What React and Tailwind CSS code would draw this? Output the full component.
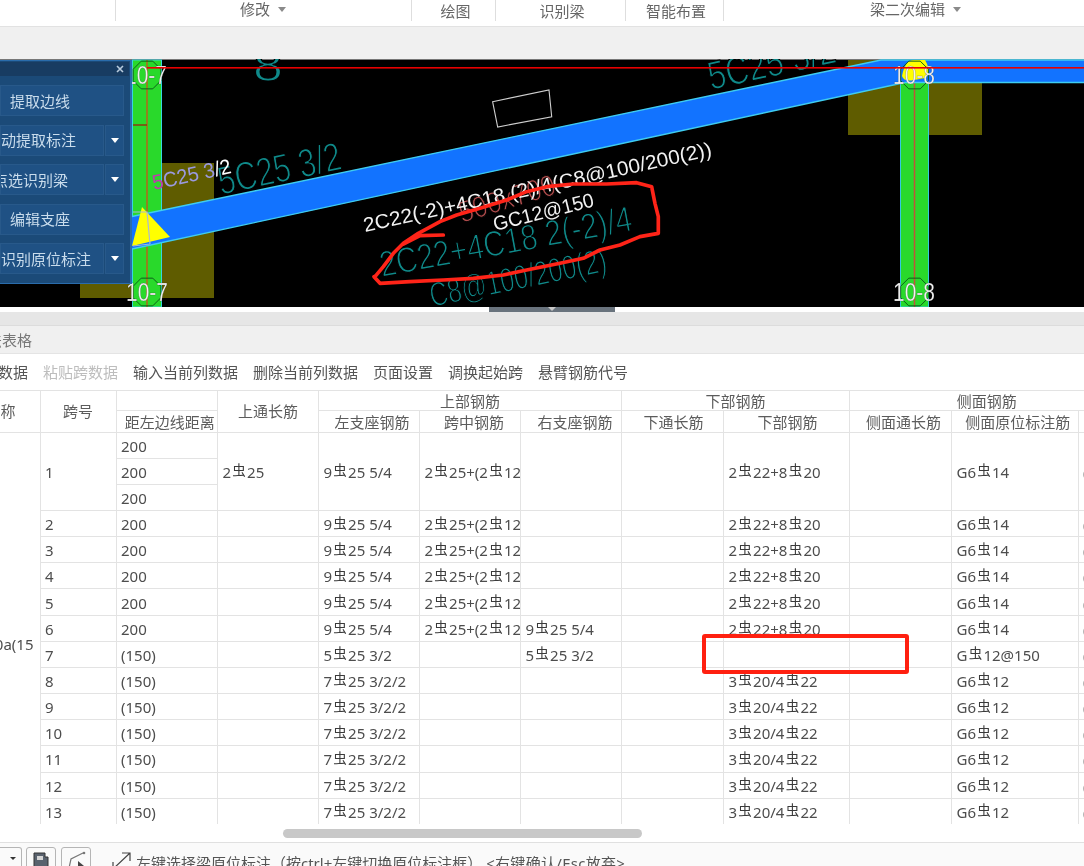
const F = "虫";
function Bar() {
  return <span className="inline-block w-[16px] text-center text-[13.5px] leading-none align-[2.5px] text-[#3a3a3a]">{F}</span>;
}
function Rebar({ t }) {
  const parts = t.split("#");
  return (
    <>
      {parts.map((p, i) => (
        <span key={i}>
          {i > 0 && <Bar />}
          {p}
        </span>
      ))}
    </>
  );
}
const cell = "border-r border-b border-[#e3e3e3] flex items-center whitespace-nowrap overflow-hidden";
const hd = cell + " justify-center text-[#5c5c5c]";
const td = cell + " pl-[4.5px] pt-[1px] text-[#4d4d4d]";

function Cell({ t, span3, className = "" }) {
  return (
    <div className={td + " " + (span3 ? "row-span-3 " : "") + className}>
      {t ? <Rebar t={t} /> : null}
    </div>
  );
}

const rows = [
  ["2", "200", "", "9#25 5/4", "2#25+(2#12", "", "", "2#22+8#20", "", "G6#14"],
  ["3", "200", "", "9#25 5/4", "2#25+(2#12", "", "", "2#22+8#20", "", "G6#14"],
  ["4", "200", "", "9#25 5/4", "2#25+(2#12", "", "", "2#22+8#20", "", "G6#14"],
  ["5", "200", "", "9#25 5/4", "2#25+(2#12", "", "", "2#22+8#20", "", "G6#14"],
  ["6", "200", "", "9#25 5/4", "2#25+(2#12", "9#25 5/4", "", "2#22+8#20", "", "G6#14"],
  ["7", "(150)", "", "5#25 3/2", "", "5#25 3/2", "", "", "", "G #12@150"],
  ["8", "(150)", "", "7#25 3/2/2", "", "", "", "3#20/4#22", "", "G6#12"],
  ["9", "(150)", "", "7#25 3/2/2", "", "", "", "3#20/4#22", "", "G6#12"],
  ["10", "(150)", "", "7#25 3/2/2", "", "", "", "3#20/4#22", "", "G6#12"],
  ["11", "(150)", "", "7#25 3/2/2", "", "", "", "3#20/4#22", "", "G6#12"],
  ["12", "(150)", "", "7#25 3/2/2", "", "", "", "3#20/4#22", "", "G6#12"],
  ["13", "(150)", "", "7#25 3/2/2", "", "", "", "3#20/4#22", "", "G6#12"],
];

function Table() {
  return (
    <div className="h-[434px] overflow-hidden border-t border-[#e3e3e3] relative">
      <div className="grid w-[1124px] grid-cols-[40.5px_76px_101.5px_101px_101px_101px_101px_102px_126px_102px_126.5px_46px] grid-rows-[20px_21.5px_repeat(15,26.17px)]">
        <div className={hd + " row-span-2 justify-end pr-[24px]"}>名称</div>
        <div className={hd + " row-span-2"}>跨号</div>
        <div className={hd}></div>
        <div className={hd + " row-span-2"}>上通长筋</div>
        <div className={hd + " col-span-3"}>上部钢筋</div>
        <div className={hd + " col-span-2"}>下部钢筋</div>
        <div className={hd + " col-span-3"}>侧面钢筋</div>
        <div className={hd + " pl-[6px] pt-[1px]"}>距左边线距离</div>
        <div className={hd + " pl-[6px] pt-[1px]"}>左支座钢筋</div>
        <div className={hd + " pl-[8px] pt-[1px]"}>跨中钢筋</div>
        <div className={hd + " pl-[8px] pt-[1px]"}>右支座钢筋</div>
        <div className={hd + " pl-[2px] pt-[1px]"}>下通长筋</div>
        <div className={hd + " pl-[2px] pt-[1px]"}>下部钢筋</div>
        <div className={hd + " pl-[6px] pt-[1px]"}>侧面通长筋</div>
        <div className={hd + " pl-[6px] pt-[1px]"}>侧面原位标注筋</div>
        <div className={hd}></div>

        <div className={cell + " row-span-[15] justify-end pr-[6px] pt-[32px] text-[#4d4d4d]"}>0a(15</div>
        <Cell t="1" span3 />
        <Cell t="200" />
        <Cell t="2#25" span3 />
        <Cell t="9#25 5/4" span3 />
        <Cell t="2#25+(2#12" span3 />
        <Cell t="" span3 />
        <Cell t="" span3 />
        <Cell t="2#22+8#20" span3 />
        <Cell t="" span3 />
        <Cell t="G6#14" span3 />
        <Cell t="(" span3 />
        <Cell t="200" />
        <Cell t="200" />
        {rows.map((r, i) => (
          <div key={i} className="contents">
            {r.map((c, j) => (
              <Cell key={j} t={c} />
            ))}
            <Cell t="(" />
          </div>
        ))}
      </div>
      <div className="absolute left-[702px] top-[243px] w-[207px] h-[40px] border-[4px] border-[#ff2010] rounded-[3px]"></div>
    </div>
  );
}

function PanelButton({ text, offset, arrow }) {
  return (
    <div className="flex h-[31px] gap-px">
      <div
        className={
          "h-full flex items-center bg-[#1f5184] border border-[#28598a] text-[#c9dcec] overflow-hidden whitespace-nowrap " +
          (arrow ? "w-[104px]" : "w-[124px]")
        }
      >
        <span className={offset}>{text}</span>
      </div>
      {arrow && (
        <div className="w-[19px] h-full flex items-center justify-center bg-[#1f5184] border border-[#28598a]">
          <div className="w-0 h-0 border-x-[4px] border-x-transparent border-t-[5px] border-t-white"></div>
        </div>
      )}
    </div>
  );
}

function Panel() {
  return (
    <div className="absolute left-0 top-[1px] w-[132px] h-[224px] bg-[#1b4a78] border-r-2 border-b border-t border-[#2a6cab]">
      <div className="h-[14px] mt-[1px] mr-[1px] bg-[#183c62] flex items-center justify-end pr-[5px]">
        <svg width="8" height="8" viewBox="0 0 8 8">
          <path d="M1 1L7 7M7 1L1 7" stroke="#b8cbdd" strokeWidth="1.6" />
        </svg>
      </div>
      <div className="flex flex-col gap-[8.5px] mt-[9px]">
        <PanelButton text="提取边线" offset="ml-[9px]" />
        <PanelButton text="动提取标注" offset="ml-0" arrow />
        <PanelButton text="点选识别梁" offset="-ml-[8px]" arrow />
        <PanelButton text="编辑支座" offset="ml-[9px]" />
        <PanelButton text="识别原位标注" offset="ml-0" arrow />
      </div>
    </div>
  );
}

function Hex({ cx, cy }) {
  const r = 15;
  const pts = [0, 1, 2, 3, 4, 5, 6, 7].map((i) => {
    const a = (Math.PI / 4) * i + Math.PI / 8;
    return `${cx + r * Math.cos(a)},${cy + r * Math.sin(a)}`;
  });
  return <polygon points={pts.join(" ")} fill="none" stroke="#0d5f1a" strokeWidth="1" />;
}

function Label({ x, y, t }) {
  return (
    <text x={x} y={y} fontSize="25" fill="#f2f2f2" stroke="#000" strokeOpacity="0.35" strokeWidth="0.5" textLength="42" lengthAdjust="spacingAndGlyphs">
      {t}
    </text>
  );
}

function Cad({ x, y, rot, size, len, fill = "#0f8a8a", thin = 1.25, children }) {
  return (
    <text
      transform={`rotate(${rot} ${x} ${y})`}
      x={x}
      y={y}
      fontSize={size}
      fill={fill}
      stroke="#000"
      strokeWidth={thin}
      textLength={len}
      lengthAdjust="spacingAndGlyphs"
    >
      {children}
    </text>
  );
}

function CadCanvas() {
  return (
    <svg className="block" width="1084" height="248" viewBox="0 59 1084 248" fontFamily="'Liberation Sans', sans-serif">
      <rect x="0" y="59" width="1084" height="248" fill="#000" />
      <rect x="0" y="59" width="1084" height="1" fill="#777" />
      <rect x="80" y="284" width="134" height="14" fill="#5f5c00" />
      <rect x="162" y="163" width="52" height="135" fill="#5f5c00" />
      <rect x="848" y="60" width="134" height="75" fill="#5f5c00" />
      <rect x="132.5" y="60" width="29" height="247" fill="#29d92b" stroke="#35d6e0" strokeWidth="1" />
      <rect x="900.5" y="80" width="28" height="227" fill="#29d92b" stroke="#35c8e0" strokeWidth="1" />
      <line x1="147" y1="60" x2="147" y2="307" stroke="#b5651d" strokeWidth="1.5" />
      <line x1="914.5" y1="80" x2="914.5" y2="307" stroke="#c0533a" strokeWidth="1.5" />
      <line x1="133" y1="125" x2="147" y2="125" stroke="#8a3a10" strokeWidth="1.5" />
      <polygon points="132,216.5 881,60 1084,60 1084,82.5 905,82.5 132,249" fill="#1273ff" />
      <path d="M132,216.5 L881,60 L1084,60 M132,249 L905,82.5 L1084,82.5" fill="none" stroke="#3fcdf0" strokeWidth="1.4" />
      <polygon points="142,207 132,246 170,237" fill="#ffff00" />
      <path d="M133,212 L147,212 L150,244 M133,246 L150,244" fill="none" stroke="#a8b8d8" strokeWidth="1.2" />
      <path d="M902,76 Q905,60 914,60 L925,60 Q932,72 925,78 L914,80 Q904,82 902,76Z" fill="#ffff00" />
      <Hex cx={147} cy={75} />
      <Hex cx={147} cy={292} />
      <Hex cx={914.5} cy={75} />
      <Hex cx={914.5} cy={292} />
      <Label x={125} y={84} t="10-7" />
      <Label x={126} y={301} t="10-7" />
      <Label x={893} y={84} t="10-8" />
      <Label x={893} y={301} t="10-8" />

      <Cad x={253} y={81} rot={0} size={44} len={30}>8</Cad>
      <polygon points="492.6,101.7 549,90 551.7,116.7 497.7,127" fill="none" stroke="#cfcfcf" strokeWidth="1.1" />

      <Cad x={221} y={195} rot={-12} size={40} len={125}>5C25 3/2</Cad>
      <Cad x={711} y={90} rot={-12.3} size={40} len={130}>5C25 3/2</Cad>
      <Cad x={382} y={277} rot={-10.5} size={36} len={256}>2C22+4C18  2(-2)/4</Cad>
      <Cad x={432} y={307} rot={-11.5} size={34} len={180}>C8@100/200(2)</Cad>
      <Cad x={462} y={223} rot={-17} size={30} len={100} fill="#b04c4c" thin={0.9}>500x700</Cad>

      <rect x="147" y="67" width="937" height="1.6" fill="#e80000" />

      <text transform="rotate(-12.3 154 190)" x="154" y="190" fontSize="21" fill="#9a9ae0" textLength="80" lengthAdjust="spacingAndGlyphs">
        <tspan fill="#c03ab0">5</tspan>C25 3<tspan fill="#ffffff">/2</tspan>
      </text>
      <text transform="rotate(-12.4 365 232)" x="365" y="232" fontSize="20" fill="#f2f2f2" textLength="356" lengthAdjust="spacingAndGlyphs">2C22(-2)+4C18 (2)/4(C8@100/200(2))</text>
      <text transform="rotate(-14 495 231)" x="495" y="231" fontSize="20" fill="#f2f2f2" textLength="103" lengthAdjust="spacingAndGlyphs">GC12@150</text>

      <g transform="translate(360 170) scale(0.3333)" fill="none" stroke="#ff2418" strokeWidth="11" strokeLinejoin="round" strokeLinecap="round">
        <path d="M45,320 L70,290 L100,250 L130,220 L175,190 L240,155 L290,135 L360,115 L440,90 L500,65 L560,50 L640,42 L740,42 L830,38 L875,50 L885,100 L895,140 L895,190 L840,200 L780,225 L720,240 L670,265 L600,280 L500,300 L430,315 L340,325 L250,330 L150,335 L60,340 L42,320" />
        <path d="M130,222 L180,197 L250,195" />
      </g>
    </svg>
  );
}

function TopTab({ w, label, arrow, border = true, up, nudge = "" }) {
  return (
    <div className={"h-[21px] shrink-0 flex items-center justify-center gap-[8px] text-[#666666] " + w + " " + nudge + (border ? " border-r border-[#dedede]" : "")}>
      <span className={up ? "-mt-[4px]" : ""}>{label}</span>
      {arrow && <div className="w-0 h-0 -mt-[3px] border-x-[4px] border-x-transparent border-t-[5px] border-t-[#8a8a8a]"></div>}
    </div>
  );
}

function Status() {
  return (
    <div className="h-[24px] bg-[#fafafa] border-t border-[#e0e0e0] flex items-start overflow-hidden text-[#555]">
      <div className="mt-[4px] w-[22px] h-[30px] border border-[#b5b5b5] border-l-0 rounded-r-[3px] flex justify-end pr-[5px] pt-[9px]">
        <div className="w-0 h-0 border-x-[3px] border-x-transparent border-t-[3px] border-t-[#333]"></div>
      </div>
      <div className="mt-[4px] ml-[4px] w-[30px] h-[30px] border border-[#b5b5b5] rounded-[3px] flex justify-center pt-[4px]">
        <svg width="16" height="18" viewBox="0 0 16 18">
          <path d="M1 1H12V5H15V17H1Z" fill="#59626e" stroke="#333" />
          <rect x="4" y="4" width="6" height="4" fill="#d5d5d5" />
        </svg>
      </div>
      <div className="mt-[4px] ml-[5px] w-[30px] h-[30px] border border-[#b5b5b5] rounded-[3px] flex justify-center pt-[3px]">
        <svg width="20" height="18" viewBox="0 0 20 18">
          <path d="M3 17L5 8L17 2" fill="none" stroke="#777" strokeWidth="1.2" />
          <circle cx="18" cy="2" r="1.3" fill="#777" />
          <path d="M12 10L18 15L12 17Z" fill="#444" />
        </svg>
      </div>
      <svg className="ml-[21px] mt-[8px] shrink-0" width="20" height="20" viewBox="0 0 20 20">
        <path d="M1 18L18 2M10 2H18V10M1 11V18H9" fill="none" stroke="#444" strokeWidth="1.2" />
      </svg>
      <span className="ml-[4px] mt-[10px] whitespace-nowrap">
        左键选择梁原位标注（按ctrl+左键切换原位标注框） <span className="tracking-[0.3px]">&lt;右键确认/Esc放弃&gt;</span>
      </span>
    </div>
  );
}

export default function App() {
  return (
    <div className="w-[1084px] h-[866px] overflow-hidden bg-white flex flex-col text-[15px] leading-[20px] blur-[0.35px] [font-family:'Noto_Sans','Noto_Sans_CJK_SC',sans-serif]">
      <div className="h-[27px] shrink-0 border-b border-[#e2e2e2] flex items-start overflow-hidden">
        <div className="w-[115.5px] shrink-0 h-[21px] border-r border-[#dedede]"></div>
        <TopTab w="w-[296px]" label="修改" arrow up />
        <TopTab w="w-[84px]" label="绘图" nudge="pl-[5px]" />
        <TopTab w="w-[130px]" label="识别梁" nudge="pl-[4px]" />
        <TopTab w="w-[98px]" label="智能布置" nudge="pl-[4px]" />
        <TopTab w="w-[384px]" label="梁二次编辑" arrow up border={false} />
      </div>
      <div className="h-[32px] shrink-0 bg-[#f0f0f0]"></div>
      <div className="h-[248px] shrink-0 relative overflow-hidden">
        <CadCanvas />
        <Panel />
      </div>
      <div className="h-[5px] shrink-0 bg-white">
        <div className="ml-[489px] w-[126px] h-full bg-[#69737d] flex justify-center">
          <div className="w-0 h-0 border-x-[4px] border-x-transparent border-t-[4px] border-t-[#c9c9c9]"></div>
        </div>
      </div>
      <div className="h-[14px] shrink-0 bg-[#e6e6e6] border-b border-[#dcdcdc]"></div>
      <div className="h-[28px] shrink-0 bg-[#f0f0f0] border-b border-[#e4e4e4] flex items-center text-[#777]">
        <span className="-ml-[43px] whitespace-nowrap">梁平法表格</span>
      </div>
      <div className="h-[36px] shrink-0 flex items-center gap-[15px] -ml-[47px] whitespace-nowrap text-[#555]">
        <span>复制跨数据</span>
        <span className="text-[#bdbdbd]">粘贴跨数据</span>
        <span>输入当前列数据</span>
        <span>删除当前列数据</span>
        <span>页面设置</span>
        <span>调换起始跨</span>
        <span>悬臂钢筋代号</span>
      </div>
      <Table />
      <div className="h-[18px] shrink-0 pt-[5px] pl-[283px]">
        <div className="w-[359px] h-[9px] bg-[#c8c8c8] rounded-full"></div>
      </div>
      <Status />
    </div>
  );
}
